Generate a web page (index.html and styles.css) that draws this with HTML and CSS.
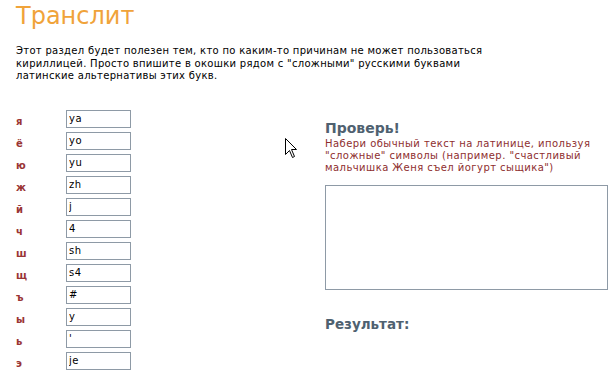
FILE: index.html
```html
<!DOCTYPE html>
<html lang="ru">
  <head>
    <meta charset="utf-8" />
    <link rel="stylesheet" href="styles.css">
  </head>
  <body>
    <div class="page">
      <h1 class="title">Транслит</h1>
      <p class="intro">
        Этот раздел будет полезен тем, кто по каким-то причинам не может пользоваться<br>
        кириллицей. Просто впишите в окошки рядом с "сложными" русскими буквами<br>
        латинские альтернативы этих букв.
      </p>
      <div class="main">
        <div class="letters">
          <div class="row"><label>я</label><input type="text" value="ya" /></div>
          <div class="row"><label>ё</label><input type="text" value="yo" /></div>
          <div class="row"><label>ю</label><input type="text" value="yu" /></div>
          <div class="row"><label>ж</label><input type="text" value="zh" /></div>
          <div class="row"><label>й</label><input type="text" value="j" /></div>
          <div class="row"><label>ч</label><input type="text" value="4" /></div>
          <div class="row"><label>ш</label><input type="text" value="sh" /></div>
          <div class="row"><label>щ</label><input type="text" value="s4" /></div>
          <div class="row"><label>ъ</label><input type="text" value="#" /></div>
          <div class="row"><label>ы</label><input type="text" value="y" /></div>
          <div class="row"><label>ь</label><input type="text" value="'" /></div>
          <div class="row"><label>э</label><input type="text" value="je" /></div>
        </div>
        <div class="check">
          <h2>Проверь!</h2>
          <p class="hint">
            Набери обычный текст на латинице, ипользуя<br>
            "сложные" символы (например. "счастливый<br>
            мальчишка Женя съел йогурт сыщика")
          </p>
          <textarea class="source"></textarea>
          <h2 class="result">Результат:</h2>
        </div>
      </div>
      <svg class="cursor" width="13" height="21" viewBox="0 0 13 21">
        <path d="M0.5 0.5 L0.5 16.5 L4.5 12.5 L7.5 19.5 L9.5 18.5 L6.5 11.5 L11.5 11.5 Z" fill="#fff" stroke="#000" stroke-width="1" />
      </svg>
    </div>
  </body>
</html>
```

FILE: styles.css
```css
html,
body {
  margin: 0;
  padding: 0;
  background: #ffffff;
}
body {
  font: 10px/12px "DejaVu Sans", Verdana, sans-serif;
  color: #000000;
}
.page {
  position: relative;
  padding: 0 16px;
}
.title {
  margin: 0;
  padding-top: 2px;
  font-size: 24px;
  line-height: 28px;
  font-weight: normal;
  color: #f0a33a;
}
.intro {
  margin: 15px 0 0;
  line-height: 12.5px;
  letter-spacing: 0.3px;
}
.main {
  display: flex;
  margin-top: 27px;
}
.letters {
  width: 309px;
  flex: none;
}
.row {
  display: flex;
  align-items: center;
  height: 22px;
}
.row label {
  width: 50px;
  padding-top: 2px;
  font-weight: bold;
  color: #9a3535;
}
.row input {
  box-sizing: border-box;
  width: 65px;
  height: 18px;
  margin: 0 0 4px;
  padding: 0 2px;
  border: 1px solid #8e9aa6;
  font: 10px "DejaVu Sans", Verdana, sans-serif;
  letter-spacing: 0.5px;
  color: #000;
  background: #fff;
}
.check {
  padding-top: 10px;
}
.check h2 {
  margin: 0;
  font-size: 14px;
  line-height: 17px;
  color: #4f6170;
}
.hint {
  margin: 1px 0 0;
  letter-spacing: 0.45px;
  color: #8e2e2e;
}
.source {
  display: block;
  box-sizing: border-box;
  width: 283px;
  height: 105px;
  margin-top: 11px;
  border: 1px solid #8e9aa6;
  resize: none;
}
.check .result {
  margin-top: 26px;
  font-size: 13.5px;
}
.cursor {
  position: absolute;
  left: 285px;
  top: 138px;
}
```
